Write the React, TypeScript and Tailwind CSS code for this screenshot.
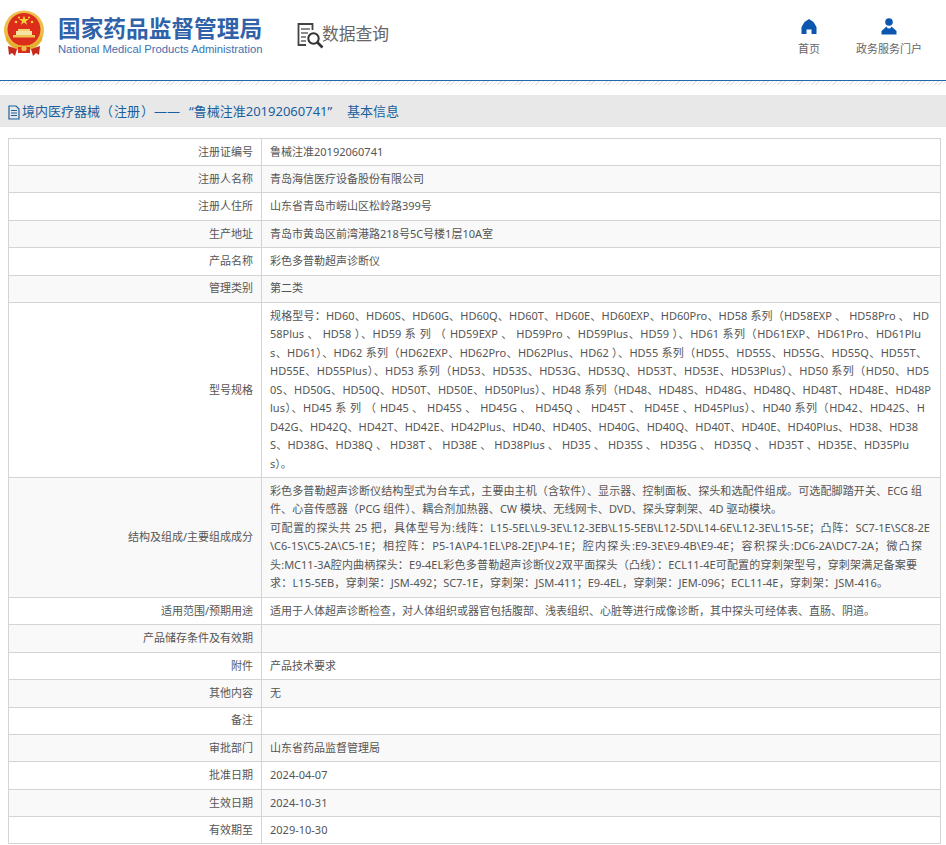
import React from "react";

type Line = { t: string; w: string };
type Row = { label: string; value?: string; lines?: Line[]; h: string };

const spec: Line[] = [
  { t: "规格型号：HD60、HD60S、HD60G、HD60Q、HD60T、HD60E、HD60EXP、HD60Pro、HD58 系列（HD58EXP 、 HD58Pro 、 HD", w: "w-[659px] [text-align-last:justify]" },
  { t: "58Plus 、 HD58 ）、HD59 系 列 （ HD59EXP 、 HD59Pro 、HD59Plus、HD59 ）、HD61 系列（HD61EXP、HD61Pro、HD61Plu", w: "w-[651px] [text-align-last:justify]" },
  { t: "s、HD61）、HD62 系列（HD62EXP、HD62Pro、HD62Plus、HD62 ）、HD55 系列（HD55、HD55S、HD55G、HD55Q、HD55T、", w: "w-[657px] [text-align-last:justify]" },
  { t: "HD55E、HD55Plus）、HD53 系列（HD53、HD53S、HD53G、HD53Q、HD53T、HD53E、HD53Plus）、HD50 系列（HD50、HD5", w: "w-[659px] [text-align-last:justify]" },
  { t: "0S、HD50G、HD50Q、HD50T、HD50E、HD50Plus）、HD48 系列（HD48、HD48S、HD48G、HD48Q、HD48T、HD48E、HD48P", w: "w-[661px] [text-align-last:justify]" },
  { t: "lus）、HD45 系 列 （ HD45 、 HD45S 、 HD45G 、 HD45Q 、 HD45T 、 HD45E 、HD45Plus）、HD40 系列（HD42、HD42S、H", w: "w-[655px] [text-align-last:justify]" },
  { t: "D42G、HD42Q、HD42T、HD42E、HD42Plus、HD40、HD40S、HD40G、HD40Q、HD40T、HD40E、HD40Plus、HD38、HD38", w: "w-[648px] [text-align-last:justify]" },
  { t: "S、HD38G、HD38Q 、 HD38T 、 HD38E 、 HD38Plus 、 HD35 、 HD35S 、 HD35G 、 HD35Q 、 HD35T 、HD35E、HD35Plu", w: "w-[639px] [text-align-last:justify]" },
  { t: "s）。", w: "" },
];

const struct: Line[] = [
  { t: "彩色多普勒超声诊断仪结构型式为台车式，主要由主机（含软件）、显示器、控制面板、探头和选配件组成。可选配脚踏开关、ECG 组", w: "w-[652px] [text-align-last:justify]" },
  { t: "件、心音传感器（PCG 组件）、耦合剂加热器、CW 模块、无线网卡、DVD、探头穿刺架、4D 驱动模块。", w: "w-[512px] [text-align-last:justify]" },
  { t: "可配置的探头共 25 把，具体型号为:线阵：L15-5EL\\L9-3E\\L12-3EB\\L15-5EB\\L12-5D\\L14-6E\\L12-3E\\L15-5E；凸阵：SC7-1E\\SC8-2E", w: "w-[660px] [text-align-last:justify]" },
  { t: "\\C6-1S\\C5-2A\\C5-1E；相控阵：P5-1A\\P4-1EL\\P8-2EJ\\P4-1E；腔内探头:E9-3E\\E9-4B\\E9-4E；容积探头:DC6-2A\\DC7-2A；微凸探", w: "w-[652px] [text-align-last:justify]" },
  { t: "头:MC11-3A腔内曲柄探头：E9-4EL彩色多普勒超声诊断仪2双平面探头（凸线）：ECL11-4E可配置的穿刺架型号，穿刺架满足备案要", w: "w-[647px] [text-align-last:justify]" },
  { t: "求：L15-5EB，穿刺架：JSM-492；SC7-1E，穿刺架：JSM-411；E9-4EL，穿刺架：JEM-096；ECL11-4E，穿刺架：JSM-416。", w: "w-[618px] [text-align-last:justify]" },
];

const rows: Row[] = [
  { label: "注册证编号", value: "鲁械注准20192060741", h: "h-[27.4px]" },
  { label: "注册人名称", value: "青岛海信医疗设备股份有限公司", h: "h-[27.4px]" },
  { label: "注册人住所", value: "山东省青岛市崂山区松岭路399号", h: "h-[27.4px]" },
  { label: "生产地址", value: "青岛市黄岛区前湾港路218号5C号楼1层10A室", h: "h-[27.4px]" },
  { label: "产品名称", value: "彩色多普勒超声诊断仪", h: "h-[27.4px]" },
  { label: "管理类别", value: "第二类", h: "h-[27.4px]" },
  { label: "型号规格", lines: spec, h: "h-[175px]" },
  { label: "结构及组成/主要组成成分", lines: struct, h: "h-[120px]" },
  { label: "适用范围/预期用途", value: "适用于人体超声诊断检查，对人体组织或器官包括腹部、浅表组织、心脏等进行成像诊断，其中探头可经体表、直肠、阴道。", h: "h-[27.4px]" },
  { label: "产品储存条件及有效期", h: "h-[27.4px]" },
  { label: "附件", value: "产品技术要求", h: "h-[27.4px]" },
  { label: "其他内容", value: "无", h: "h-[27.4px]" },
  { label: "备注", h: "h-[27.4px]" },
  { label: "审批部门", value: "山东省药品监督管理局", h: "h-[27.4px]" },
  { label: "批准日期", value: "2024-04-07", h: "h-[27.4px]" },
  { label: "生效日期", value: "2024-10-31", h: "h-[27.4px]" },
  { label: "有效期至", value: "2029-10-30", h: "h-[27.4px]" },
];

function Emblem() {
  return (
    <svg width="42" height="46" viewBox="0 0 42 46" className="shrink-0">
      <circle cx="21" cy="20.5" r="20" fill="#ecc04a" />
      <circle cx="21" cy="19.5" r="16.5" fill="#dc2c1c" />
      <polygon points="21,5.5 22.2,9 26,9 23,11.2 24.1,14.8 21,12.6 17.9,14.8 19,11.2 16,9 19.8,9" fill="#f5d23c" />
      <circle cx="13" cy="12" r="1.3" fill="#f5d23c" />
      <circle cx="16" cy="7.5" r="1.1" fill="#f5d23c" />
      <circle cx="29" cy="12" r="1.3" fill="#f5d23c" />
      <circle cx="26" cy="7.5" r="1.1" fill="#f5d23c" />
      <rect x="15" y="19" width="12" height="2" fill="#f2cf6a" />
      <rect x="13" y="21" width="16" height="4" fill="#f6e3a4" />
      <rect x="10" y="25" width="22" height="2.5" fill="#edc552" />
      <path d="M3 24 C7 33 13 35.5 21 35.5 C29 35.5 35 33 39 24 L39 30 C35 37 29 40 21 40 C13 40 7 37 3 30 Z" fill="#e4b030" />
      <path d="M5 36 L14 39 L12 46 L9 43 L6 45 Z" fill="#c9281c" />
      <path d="M37 36 L28 39 L30 46 L33 43 L36 45 Z" fill="#c9281c" />
      <rect x="15" y="37" width="12" height="6" fill="#d9301f" />
      <circle cx="21" cy="38.5" r="2.6" fill="#ecc04a" />
    </svg>
  );
}

function QueryIcon() {
  return (
    <svg width="27" height="26" viewBox="0 0 27 26" className="shrink-0" fill="none">
      <path d="M15.5 7V1H1.5V22H9" stroke="#444" strokeWidth="1.8" />
      <path d="M4 6H13M4 10H11M4 14H9M4 18H9" stroke="#666" strokeWidth="1.6" />
      <circle cx="16.5" cy="15.5" r="5.2" stroke="#333" strokeWidth="2" />
      <path d="M20.5 19.5L25.5 24.5" stroke="#333" strokeWidth="2.6" />
    </svg>
  );
}

function HomeIcon() {
  return (
    <svg width="16" height="15" viewBox="0 0 16 15">
      <path d="M8 0L12.5 3L15.5 8V15H10.5V10.5H5.5V15H0.5V8L3.5 3Z" fill="#0b57b0" />
    </svg>
  );
}

function PersonIcon() {
  return (
    <svg width="16" height="17" viewBox="0 0 16 17">
      <circle cx="8" cy="4" r="3.8" fill="#0b57b0" />
      <path d="M5.5 8.5L0.5 13V16.5H15.5V13L10.5 8.5L9.2 10.5H6.8Z" fill="#0b57b0" />
      <path d="M7 10.8H9L8.6 14H7.4Z" fill="#0b57b0" />
    </svg>
  );
}

function DocIcon() {
  return (
    <svg width="12" height="15" viewBox="0 0 12 15" fill="none" className="shrink-0">
      <path d="M1 1H8L11 4V14H1Z" stroke="#1a5f9e" strokeWidth="1.2" />
      <path d="M3 5.5H9M3 8H9M3 10.5H9" stroke="#1a5f9e" strokeWidth="1.1" />
    </svg>
  );
}

export default function App() {
  return (
    <div className="w-[946px] h-[845px] overflow-hidden bg-white font-['Noto_Sans','Noto_Sans_CJK_SC',sans-serif] text-[11px] text-[#555]">
      <header className="flex h-[81px] items-start border-b border-[#1f68ad]">
        <div className="ml-[3px] mt-[10px]">
          <Emblem />
        </div>
        <div className="ml-[13px] mt-[14px] w-[206px]">
          <div className="whitespace-nowrap text-[22.7px] font-bold leading-[30px] text-[#2f62a9]">国家药品监督管理局</div>
          <div className="-mt-[2px] whitespace-nowrap font-['Liberation_Sans',sans-serif] text-[11.25px] leading-[14px] text-[#3b72b4]">National Medical Products Administration</div>
        </div>
        <div className="ml-[33px] mt-[23px] flex items-start">
          <QueryIcon />
          <span className="-ml-[2px] -mt-[1px] text-[16.8px] leading-[24px] text-[#666]">数据查询</span>
        </div>
        <nav className="ml-auto mr-[24px] mt-[18px] flex">
          <div className="flex w-[50px] flex-col items-center">
            <div className="flex h-[17px] items-center"><HomeIcon /></div>
            <div className="mt-[6px] leading-[16px] text-[#666]">首页</div>
          </div>
          <div className="ml-[22px] flex w-[66px] flex-col items-center">
            <PersonIcon />
            <div className="mt-[6px] whitespace-nowrap leading-[16px] text-[#666]">政务服务门户</div>
          </div>
        </nav>
      </header>
      <div className="h-[4px] bg-[repeating-linear-gradient(135deg,#e6e6e6_0,#e6e6e6_1px,#ffffff_1px,#ffffff_3px)]" />
      <div className="h-[10px]" />
      <div className="flex h-[32px] items-center gap-[2px] bg-[#e8e8e8] pl-[8px] pt-[2px] text-[13px] text-[#1a5f9e]">
        <DocIcon />
        <span className="whitespace-pre">境内医疗器械（<span className="mx-[1px]">注册</span>）<span className="mr-[9px]">——</span>“鲁械注准20192060741”  <span className="ml-[8px]">基本信息</span></span>
      </div>
      <div className="ml-[8px] mt-[10.6px] w-[933px] border-x border-t border-[#d4d4d4]">
        {rows.map((r, i) => (
          <div key={r.label} className={`flex border-b border-[#d4d4d4] ${r.h} ${i % 2 === 1 ? "bg-[#f9f9f9]" : "bg-white"}`}>
            <div className="flex w-[253px] shrink-0 items-center justify-end border-r border-[#d4d4d4] pr-[8px]">
              {r.label}
            </div>
            <div className="flex min-w-0 flex-1 flex-col justify-center pl-[8px]">
              {r.lines
                ? r.lines.map((l) => (
                    <div key={l.t} className={`h-[18.5px] whitespace-pre leading-[18.5px] ${l.w}`}>
                      {l.t}
                    </div>
                  ))
                : r.value}
            </div>
          </div>
        ))}
      </div>
    </div>
  );
}
